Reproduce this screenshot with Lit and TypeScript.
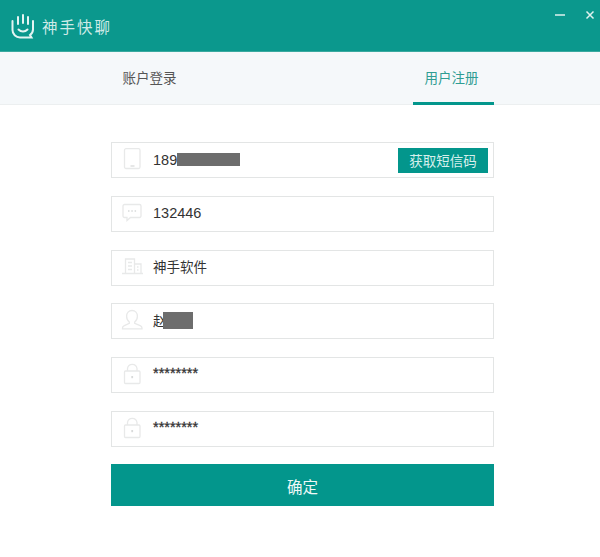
import { LitElement, html, css, svg } from "lit";
import { customElement } from "lit/decorators.js";

const ic = (body: unknown) => html`<svg class="icon" viewBox="0 0 24 24" fill="none" stroke="#e8e9e9" stroke-width="1.300">${body}</svg>`;

const phone = ic(svg`<rect x="3.500" y="0.700" width="15.500" height="19.800" rx="1.500"/><path d="M9.500 18h4" stroke="#d8dada"/>`);
const chat = ic(svg`<path d="M3.500 2.500h15A1.500 1.500 0 0 1 20 4v10a1.500 1.500 0 0 1-1.500 1.500H9.500L6 18.500v-3H3.500A1.500 1.500 0 0 1 2 14V4a1.500 1.500 0 0 1 1.500-1.500z"/><path d="M7 9h1.500M10.300 9h1.500M13.600 9h1.500" stroke="#d8dada"/>`);
const building = ic(svg`<path d="M1 17.500h21M4.500 17.500V3h9v14.500M13.500 8H20v9.500M7 6.500h4M7 10h4M7 13.500h4M16 11h1.500M16 14h1.500"/>`);
const user = ic(svg`<path d="M11 1.500c3.300 0 5.400 2.400 5.400 5.700 0 2.600-1.100 4.500-2.700 5.700v1.400l5.500 2.300c1 .4 1.800 1.200 1.800 2.300v.9H1.500v-.9c0-1.100.8-1.900 1.800-2.300l5-2.300v-1.400C6.700 11.700 5.600 9.800 5.600 7.200 5.600 3.900 7.700 1.500 11 1.500z"/>`);
const lock = ic(svg`<rect x="3.500" y="8" width="15.500" height="12.500" rx="1"/><path d="M6.500 8V5.500a4.800 4.800 0 0 1 9.500 0V8"/><path d="M11.200 13v2.200" stroke="#d8dada" stroke-width="1.800"/>`);

@customElement("app-root")
export class AppRoot extends LitElement {
  static styles = css`
    :host {
      display: block;
      width: 600px;
      height: 557px;
      background: #fff;
      font-family: "Liberation Sans", "Noto Sans CJK SC", sans-serif;
      color: #333;
      overflow: hidden;
    }
    .title {
      height: 52px;
      background: #0b988d;
      border-bottom: 1px solid #3aa99f;
      box-sizing: border-box;
      display: flex;
      align-items: center;
      padding: 0 0 0 11px;
      color: #dff2ef;
    }
    .logo {
      width: 24px;
      height: 26px;
      margin-top: 1px;
    }
    .name {
      margin-left: 7px;
      font-size: 15.500px;
      letter-spacing: 2px;
      opacity: 0.92;
    }
    .winbtns {
      margin-left: auto;
      display: flex;
      gap: 20px;
      align-items: center;
      margin-right: 5px;
      margin-bottom: 22px;
    }
    .winbtns svg { width: 10px; height: 10px; display: block; }
    .tabs {
      height: 53px;
      background: #f5f8fa;
      display: flex;
      border-bottom: 1px solid #eceff0;
      box-sizing: border-box;
      justify-content: space-between;
      padding: 0 106px 0 109px;
    }
    .tab {
      width: 81px;
      display: flex;
      align-items: center;
      justify-content: center;
      font-size: 13.500px;
      color: #555;
      padding-bottom: 3px;
      box-sizing: border-box;
      margin-bottom: -1px;
    }
    .tab.active {
      color: #2f9d93;
      border-bottom: 3px solid #03968c;
      padding: 0 4px 1px 0;
    }
    form {
      display: flex;
      flex-direction: column;
      width: 383px;
      margin: 37px 0 0 111px;
      gap: 17.800px;
    }
    .field {
      height: 36px;
      box-sizing: border-box;
      border: 1px solid #e3e5e5;
      display: flex;
      align-items: center;
      padding-left: 9px;
      font-size: 13.500px;
      color: #333;
    }
    .icon {
      width: 24px;
      height: 24px;
      flex: none;
      margin-right: 8px;
    }
    .num { font-size: 14.500px; margin-bottom: 1px; }
    .cjk { margin-bottom: 3px; }
    .mask {
      background: #6d6d6d;
      display: inline-block;
    }
    .mask.phone { width: 63px; height: 13px; margin-bottom: 2px; }
    .mask.person { width: 30px; height: 17px; margin-left: -4px; margin-bottom: 2px; }
    .stars { font-size: 14.500px; margin-bottom: 4px; -webkit-text-stroke: 0.3px #333; }
    .code {
      margin-left: auto;
      margin-right: 5px;
      width: 90px;
      height: 25px;
      background: #03968c;
      color: #d6efec;
      display: flex;
      align-items: center;
      justify-content: center;
      font-size: 13.500px;
    }
    .submit {
      margin-top: -1px;
      height: 42px;
      padding-top: 2px;
      box-sizing: border-box;
      background: #03968c;
      color: #eef8f7;
      display: flex;
      align-items: center;
      justify-content: center;
      font-size: 15.500px;
    }
  `;

  render() {
    return html`
      <div class="title">
        <svg class="logo" viewBox="0 0 24 26" fill="none" stroke="#e4f4f2" stroke-width="2" stroke-linecap="round">
          <path d="M1.500 8v9a7.500 7.500 0 0 0 7.500 7.500h11.500l-1.500-2.500c2-1.500 3-3 3-5.500V8"/>
          <path d="M7 11V4M12 10V2M17 11V4"/>
          <path d="M7.500 16.500c2.500 2.500 6.500 2.500 9 0"/>
        </svg>
        <span class="name">神手快聊</span>
        <div class="winbtns">
          <svg viewBox="0 0 10 10" stroke="#dff2ef" stroke-width="1.500"><path d="M0 5h10"/></svg>
          <svg viewBox="0 0 10 10" stroke="#dff2ef" stroke-width="1.500"><path d="M1.500 1.500l7 7M8.500 1.500l-7 7"/></svg>
        </div>
      </div>
      <div class="tabs">
        <div class="tab">账户登录</div>
        <div class="tab active">用户注册</div>
      </div>
      <form>
        <div class="field">${phone}<span class="num">189</span><span class="mask phone"></span><div class="code">获取短信码</div></div>
        <div class="field">${chat}<span class="num">132446</span></div>
        <div class="field">${building}<span class="cjk">神手软件</span></div>
        <div class="field">${user}<span class="cjk">赵</span><span class="mask person"></span></div>
        <div class="field">${lock}<span class="stars">********</span></div>
        <div class="field">${lock}<span class="stars">********</span></div>
        <div class="submit">确定</div>
      </form>
    `;
  }
}
